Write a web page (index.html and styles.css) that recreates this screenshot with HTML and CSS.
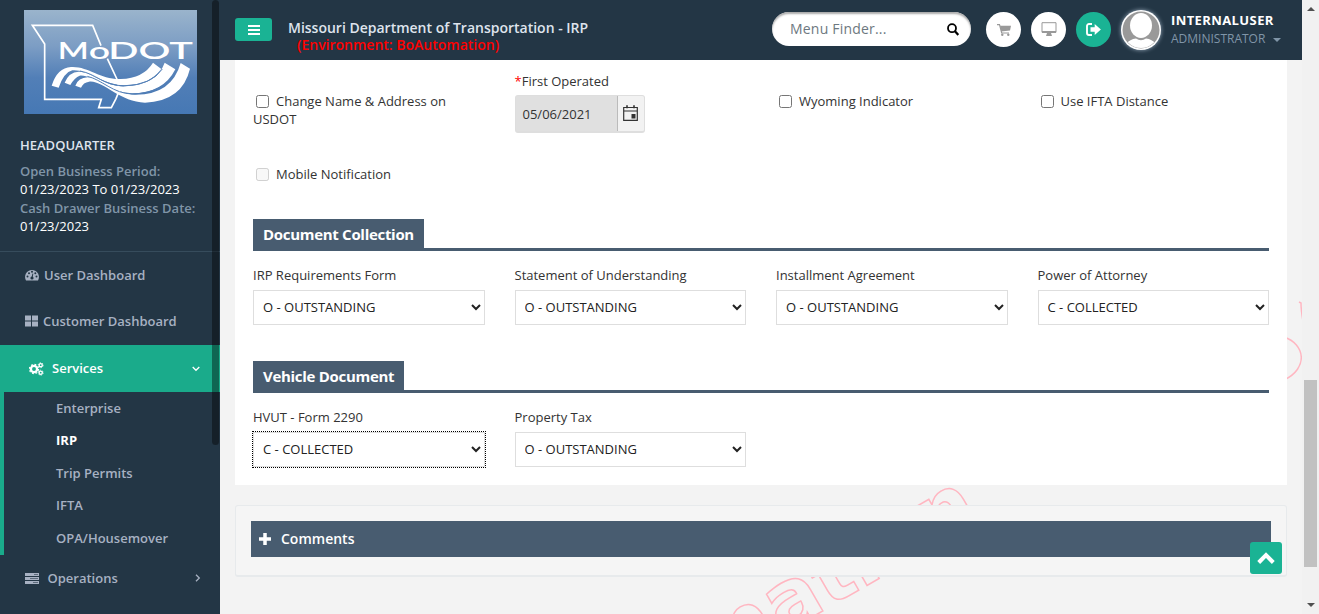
FILE: index.html
```html
<!DOCTYPE html>
<html lang="en">
<head>
<meta charset="utf-8">
<title>Missouri Department of Transportation - IRP</title>
<link rel="stylesheet" href="styles.css">
</head>
<body>
<div class="app">
  <nav class="sidebar">
    <svg class="logo" viewBox="72 30 519 312" preserveAspectRatio="none">
      <defs>
        <linearGradient id="sky" x1="0" y1="0" x2="0" y2="1">
          <stop offset="0" stop-color="#9ab4cc"/><stop offset=".35" stop-color="#7c9dc4"/>
          <stop offset=".65" stop-color="#527fb7"/><stop offset="1" stop-color="#4678b4"/>
        </linearGradient>
      </defs>
      <rect x="72" y="30" width="519" height="312" fill="url(#sky)"/>
      <path d="M303 137L278 76H97L134 132V298H304L296 323H334L348 296L358 271L352 240L322 176" fill="none" stroke="#fff" stroke-width="5"/>
      <g fill="#fff">
        <path d="M155 257Q172 203 213 201C265 198 300 239 362 237Q430 235 459 188L484 207Q445 258 370 256C305 252 260 207 217 211Q192 217 176 263Z"/>
        <path d="M194 248Q207 216 236 215C275 213 315 262 375 259Q470 255 494 188L526 208Q490 280 395 280C325 276 275 222 239 227Q224 232 211 255Z"/>
        <path d="M226 257Q235 233 263 232C300 234 350 284 405 284Q515 285 542 189L570 206Q547 303 435 308C360 307 307 239 267 245Q250 247 243 263Z"/>
      </g>
      <path d="M240 213C290 222 310 257 372 257.500Q455 255 487 207M262 229C305 238 340 282 398 282Q500 278 532 207" fill="none" stroke="#527fb7" stroke-width="3"/>
      <g fill="#fff" class="logo-text">
        <text x="173" y="176" font-size="71" textLength="93" lengthAdjust="spacingAndGlyphs">M</text>
        <text x="266" y="176" font-size="66" textLength="64" lengthAdjust="spacingAndGlyphs">o</text>
        <text x="325" y="176" font-size="71" textLength="254" lengthAdjust="spacingAndGlyphs">DOT</text>
      </g>
    </svg>
    <div class="office">
      <div class="office-name">HEADQUARTER</div>
      <div class="office-label">Open Business Period:</div>
      <div class="office-value">01/23/2023 To 01/23/2023</div>
      <div class="office-label">Cash Drawer Business Date:</div>
      <div class="office-value">01/23/2023</div>
    </div>
    <a class="nav-item user"><svg width="14" height="12" viewBox="0 0 14 12"><path d="M7 1a7 7 0 0 0-6 10.500h12A7 7 0 0 0 7 1z" fill="#a7b1c2"/><g fill="#233645"><circle cx="2.500" cy="7.500" r="1"/><circle cx="4" cy="4.200" r="1"/><circle cx="7" cy="2.800" r="1"/><circle cx="11.500" cy="7.500" r="1"/><circle cx="10.300" cy="4.300" r="1"/><circle cx="7" cy="9" r="1.600"/><path d="M6.500 8.500L7.500 4.500 8.300 4.700 7.600 8.700z"/></g></svg><span>User Dashboard</span></a>
    <a class="nav-item customer"><svg width="13" height="12" viewBox="0 0 13 12" fill="#a7b1c2"><path d="M0 .5h6v5H0zM7 .5h6v5H7zM0 6.500h6v5H0zM7 6.500h6v5H7z"/></svg><span>Customer Dashboard</span></a>
    <a class="nav-item services"><svg width="15" height="14" viewBox="0 0 15 14" fill="none" stroke="#fff"><circle cx="5" cy="7" r="3.100" stroke-width="2.300"/><circle cx="5" cy="7" r="4.600" stroke-width="1.200" stroke-dasharray="1.810 1.800"/><circle cx="11.700" cy="3.200" r="1.600" stroke-width="1.400"/><circle cx="11.700" cy="3.200" r="2.500" stroke-width=".8" stroke-dasharray="1.300 1.300"/><circle cx="11.700" cy="10.700" r="1.600" stroke-width="1.400"/><circle cx="11.700" cy="10.700" r="2.500" stroke-width=".8" stroke-dasharray="1.300 1.300"/></svg><span>Services</span><svg class="arrow" width="8" height="6" viewBox="0 0 8 6"><path d="M.7 1L4 4.300 7.300 1" fill="none" stroke="#fff" stroke-width="1.300"/></svg></a>
    <div class="subnav">
      <a>Enterprise</a><a class="current">IRP</a><a>Trip Permits</a><a>IFTA</a><a>OPA/Housemover</a>
    </div>
    <a class="nav-item operations"><svg width="14" height="11" viewBox="0 0 14 11"><path d="M0 0h14v3H0zM0 4h14v3H0zM0 8h14v3H0z" fill="#a7b1c2"/><path d="M9 1.500h4M5 5.500h8M8 9.500h5" stroke="#5c6b7b" stroke-width="1"/></svg><span>Operations</span><svg class="arrow" width="6" height="8" viewBox="0 0 6 8"><path d="M1 .7L4.300 4 1 7.300" fill="none" stroke="#a7b1c2" stroke-width="1.300"/></svg></a>
    <i class="sidebar-thumb"></i>
  </nav>

  <div class="page">
    <header class="topbar">
      <button class="toggle"><svg width="12" height="10" viewBox="0 0 12 10"><path d="M0 1h12M0 5h12M0 9h12" stroke="#fff" stroke-width="2"/></svg></button>
      <div class="title"><div>Missouri Department of Transportation - IRP</div><div class="environment">(Environment: BoAutomation)</div></div>
      <div class="finder"><span>Menu Finder...</span><svg width="12" height="13" viewBox="0 0 12 13" fill="none" stroke="#000"><circle cx="5" cy="5.200" r="4" stroke-width="1.800"/><path d="M8 8.300l3.300 3.600" stroke-width="2.200"/></svg></div>
      <a class="round cart"><svg width="14" height="12" viewBox="0 0 14 12"><path d="M0 .6h2.500L4.700 9H12" fill="none" stroke="#999" stroke-width="1.200"/><path d="M3 1.800h11l-1 4.700-8.700 1z" fill="#999"/><circle cx="5.300" cy="10.800" r="1.200" fill="#999"/><circle cx="11.300" cy="10.800" r="1.200" fill="#999"/></svg></a>
      <a class="round screen"><svg width="16" height="15" viewBox="0 0 16 15"><path d="M1 .7h14v9.600H1z" fill="#fff" stroke="#999"/><path d="M1 9h14v2H1zM6 11h4l1 3H5z" fill="#999"/></svg></a>
      <a class="round exit"><svg width="15" height="13" viewBox="0 0 15 13"><path d="M6 1H3a2 2 0 0 0-2 2v7a2 2 0 0 0 2 2h3" fill="none" stroke="#fff" stroke-width="1.900"/><path d="M4.500 4.300H8.700V1L14.900 6.500 8.700 12V8.700H4.500z" fill="#fff"/></svg></a>
      <svg class="avatar" width="48" height="48" viewBox="0 0 48 48"><defs><clipPath id="face"><circle cx="24" cy="24" r="18"/></clipPath></defs><circle cx="24" cy="24" r="20" fill="#fff"/><circle cx="24" cy="24" r="18.500" fill="#999"/><g clip-path="url(#face)" fill="#fff"><ellipse cx="24" cy="19.500" rx="11" ry="12.500"/><path d="M9 44V38Q13 33 19 32.500Q24 36 29 32.500Q35 33 39 38V44z"/></g></svg>
      <div class="user-info"><b>INTERNALUSER</b><span>ADMINISTRATOR<i class="caret"></i></span></div>
    </header>

    <main class="content">
      <svg class="watermark" width="1082" height="554" viewBox="220 60 1082 554" fill="none" stroke="#ffb6c1" stroke-width="1.500">
        <text text-anchor="end" transform="translate(982 519) rotate(-30)">BoAutomation</text>
        <path d="M1284 337C1305 344 1309 368 1284 380M1299 302Q1301 303 1301 303Q1301 312 1304 326"/>
      </svg>
      <section class="panel">
        <div class="fields options">
          <label class="check"><input type="checkbox">Change Name &amp; Address on USDOT</label>
          <div class="date"><label><em>*</em>First Operated</label>
            <div class="date-box"><span>05/06/2021</span><i><svg width="15" height="16" viewBox="0 0 15 16" fill="none" stroke="#333"><path d="M.7 2.500h13.600v12.800H.7zM.7 6h13.600" stroke-width="1.200"/><path d="M4 .2v3M11 .2v3" stroke-width="1.600"/><path d="M8.500 9h4v4.500h-4z" fill="#333" stroke="none"/></svg></i></div>
          </div>
          <label class="check"><input type="checkbox">Wyoming Indicator</label>
          <label class="check"><input type="checkbox">Use IFTA Distance</label>
        </div>
        <div class="mobile"><label class="check"><input type="checkbox" disabled>Mobile Notification</label></div>
        <h2><span>Document Collection</span></h2>
        <div class="fields docs">
          <label>IRP Requirements Form<select><option>O - OUTSTANDING</option></select></label>
          <label>Statement of Understanding<select><option>O - OUTSTANDING</option></select></label>
          <label>Installment Agreement<select><option>O - OUTSTANDING</option></select></label>
          <label>Power of Attorney<select><option>C - COLLECTED</option></select></label>
        </div>
        <h2><span>Vehicle Document</span></h2>
        <div class="fields docs">
          <label>HVUT - Form 2290<select class="focused"><option>C - COLLECTED</option></select></label>
          <label>Property Tax<select><option>O - OUTSTANDING</option></select></label>
        </div>
      </section>
      <section class="comments"><div class="comments-bar"><svg width="12" height="12" viewBox="0 0 12 12"><path d="M6 0v12M0 6h12" stroke="#fff" stroke-width="3.500"/></svg>Comments</div></section>
      <a class="to-top"><svg width="18" height="12" viewBox="0 0 18 12"><path d="M1.700 10.500L9 3l7.300 7.500" fill="none" stroke="#fff" stroke-width="4"/></svg></a>
    </main>
  </div>
  <div class="scrollbar"><i class="up"></i><i class="thumb"></i><i class="down"></i></div>
</div>
</body>
</html>
```
FILE: styles.css
```css
* { box-sizing: border-box; }
body { margin: 0; font: 13px/18.57px "Open Sans", sans-serif; color: #333; overflow: hidden; }
svg { display: block; flex: none; }
.app { display: grid; grid-template-columns: 220px 1fr 17px; height: 614px; }

.sidebar { position: relative; background: #233645; color: #a7b1c2; font-weight: 600; overflow: hidden; }
.logo { width: 173px; height: 104px; margin: 10px 0 0 24px; }
.logo-text { font-family: Lato, sans-serif; }
.office { height: 138px; padding: 22px 0 0 20px; border-bottom: 1px solid #364c5c; white-space: nowrap; }
.office-name { color: #dfe4ed; margin-bottom: 7px; }
.office-label { color: #8095a8; height: 18px; }
.office-value { color: #fff; font-weight: 500; height: 19px; }
.nav-item { display: flex; align-items: center; height: 46px; padding-left: 25px; gap: 6px; }
.user { gap: 5px; }
.customer { gap: 5px; margin-bottom: 1px; }
.services { height: 47px; background: #1aab8b; color: #fff; padding-left: 29px; gap: 8px; }
.operations { gap: 9px; padding-left: 24.5px; }
.arrow { margin-left: auto; margin-right: 20px; }
.operations .arrow { margin-right: 19px; }
.subnav { border-left: 4px solid #1aab8b; height: 163px; padding-left: 52px; }
.subnav a { display: block; line-height: 32px; height: 32.5px; }
.subnav a:nth-child(even) { line-height: 31px; }
.subnav .current { color: #fff; font-weight: 700; }
.sidebar-thumb { position: absolute; top: 0; left: 212px; width: 7px; height: 445px; border-radius: 4px; background: rgba(0,0,0,.4); }

.page { display: grid; grid-template-rows: 60px 1fr; min-width: 0; }
.topbar { background: #233645; display: flex; align-items: flex-start; }
.toggle { width: 37px; height: 23px; margin: 18px 16px 0 15px; padding: 0; border: 0; border-radius: 3px; background: #1ab394; display: flex; align-items: center; justify-content: center; }
.title { width: 468px; margin-top: 19px; font-size: 14px; line-height: 17px; font-weight: 600; color: #dfe4ed; white-space: nowrap; }
.environment { color: #f00; padding-left: 9px; }
.finder { width: 199px; height: 34px; margin: 12px 15px 0 16px; border-radius: 17px; background: #fff; box-shadow: inset 0 2px 2px #aaa; display: flex; align-items: center; justify-content: space-between; padding: 0 12px 0 18px; font-size: 14px; letter-spacing: .2px; color: #6d7880; }
.round { width: 35px; height: 35px; border-radius: 50%; background: #fff; margin: 12px 10px 0 0; display: flex; align-items: center; justify-content: center; }
.exit { background: #1ab394; }
.avatar { margin: 6px 0 0 -4px; filter: drop-shadow(0 0 2px #9ab); }
.user-info { margin: 11px 0 0 6px; line-height: 18px; white-space: nowrap; color: #8095a8; }
.user-info b { display: block; color: #fff; letter-spacing: .4px; }
.user-info span { font-size: 12px; }
.caret { display: inline-block; border: 4px solid transparent; border-top-color: #8095a8; border-bottom: 0; margin-left: 8px; vertical-align: 1px; }

.content { position: relative; background: #f3f3f3; padding: 0 15px; overflow: hidden; }
.watermark { position: absolute; left: 0; top: 0; }
.watermark text { font: bold 80px "DejaVu Sans", sans-serif; }
.panel { position: relative; width: 1052px; height: 425px; padding: 12px 18px 0; background: #fff; }
.fields { display: grid; grid-template-columns: repeat(4, 1fr); gap: 30px; }
.options { height: 91px; }
.check { display: block; padding-top: 20px; line-height: 18px; }
.check input { margin: 3px 7px 0 3px; width: 13px; height: 13px; vertical-align: -2px; }
.date em { color: #f00; font-style: normal; }
.date-box { display: flex; width: 130px; height: 38px; margin-top: 4px; border: 1px solid #dedede; border-bottom-width: 2px; border-radius: 3px; overflow: hidden; background: #e0e0e0; align-items: center; padding-left: 7px; }
.date-box span { padding-top: 2px; }
.date-box i { width: 27px; height: 36px; margin-left: auto; background: #f2f2f2; border-left: 1px solid #bbb; display: flex; align-items: center; justify-content: center; }
.mobile { height: 56px; }
.mobile .check { padding-top: 2px; }
h2 { height: 32px; margin: 0; border-bottom: 3px solid #485c70; font-size: 15px; line-height: 31px; letter-spacing: -.3px; }
h2 span { display: inline-block; height: 32px; padding: 0 10px; background: #485c70; color: #fff; }
.docs { height: 110px; padding-top: 15px; }
.docs label { display: block; }
select { display: block; width: 100%; height: 35px; margin-top: 5px; padding: 0 5px; border: 1px solid #dedede; border-radius: 0; background: #fff; color: #222; font: 13px "Open Sans", sans-serif; }
select.focused { outline: 1px dotted #000; }
.comments { position: relative; width: 1052px; height: 72px; margin-top: 20px; padding: 15px; background: #f5f5f5; border: 1px solid #e7eaec; border-bottom-width: 2px; border-radius: 3px; }
.comments-bar { width: 1020px; height: 36px; background: #485c70; color: #fff; font-size: 14px; font-weight: 600; display: flex; align-items: center; gap: 10px; padding-left: 8px; }
.to-top { position: absolute; left: 1030px; top: 482px; width: 32px; height: 32px; border-radius: 3px; background: #1ab394; display: flex; align-items: center; justify-content: center; }

.scrollbar { background: #f1f1f1; display: flex; flex-direction: column; align-items: center; }
.up, .down { border: 4px solid transparent; }
.up { border-top: 0; border-bottom-color: #505050; margin-top: 7px; }
.thumb { width: 13px; height: 187px; margin-top: 369px; background: #c1c1c1; }
.down { border-bottom: 0; border-top-color: #505050; margin-top: 36px; }
```
